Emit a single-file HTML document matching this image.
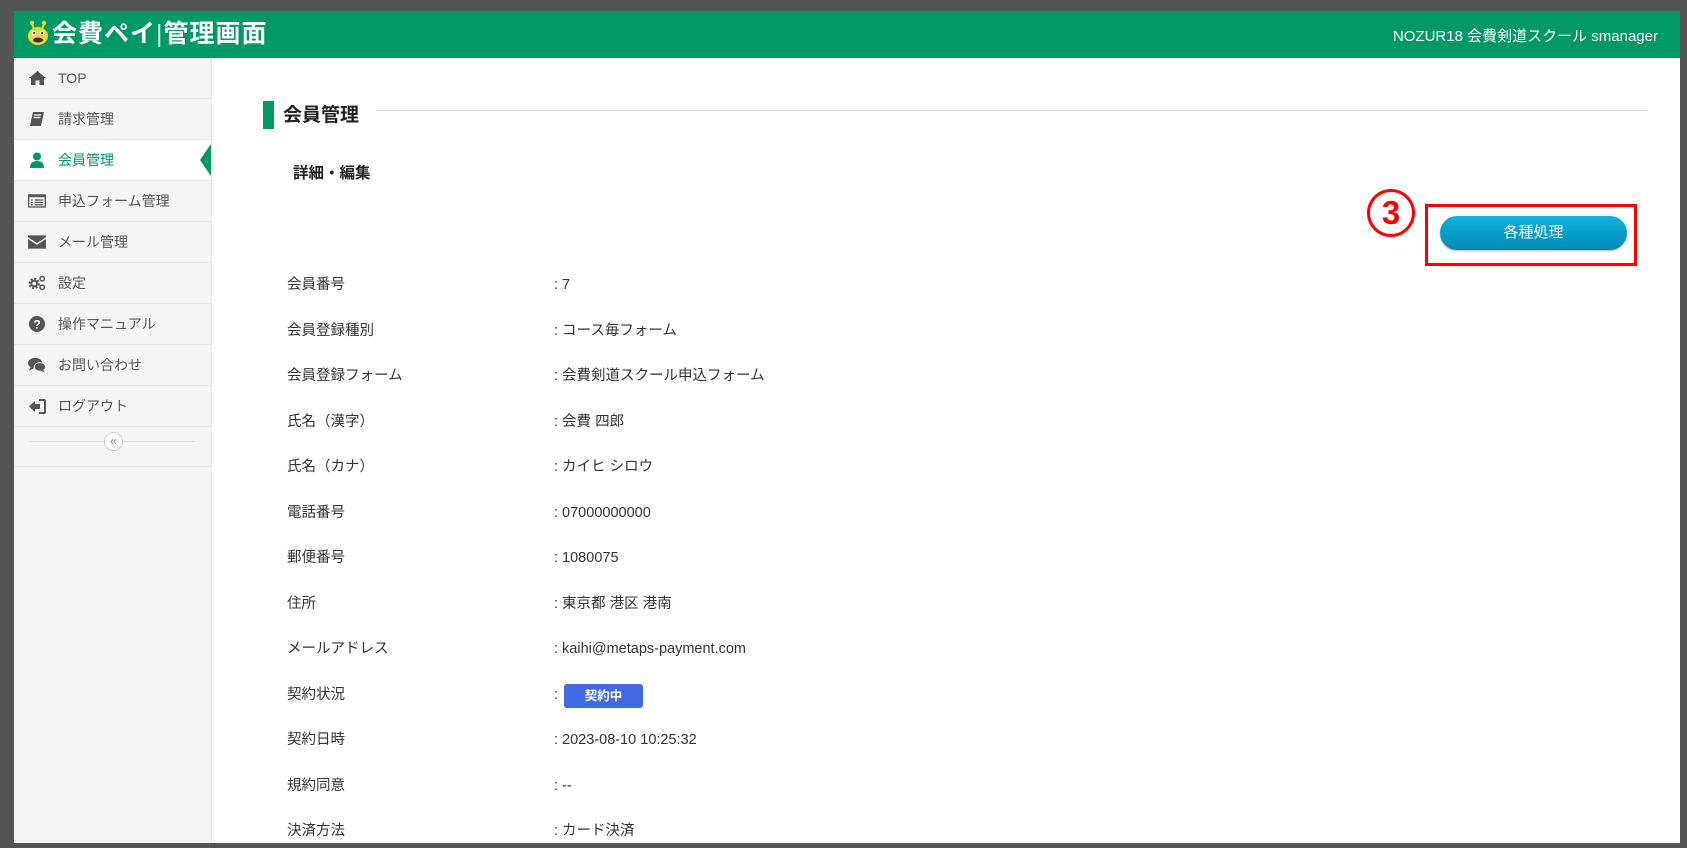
<!DOCTYPE html>
<html><head><meta charset="utf-8"><style>
*{margin:0;padding:0;box-sizing:border-box}
body{width:1687px;height:848px;overflow:hidden;background:#555;font-family:"Liberation Sans","Noto Sans CJK JP",sans-serif;position:relative}
#frame{position:absolute;left:14px;top:11px;width:1666px;height:832px;background:#fff;overflow:hidden}
#hdr{position:absolute;left:0;top:0;width:100%;height:47px;background:#009865}
#logo{position:absolute;left:40px;top:8px;color:#fff;font-size:25px;font-weight:bold;letter-spacing:1px;line-height:30px}
#user{position:absolute;right:22px;top:14px;color:#fff;font-size:15px}
#side{position:absolute;left:0;top:47px;width:198px;height:800px;background:#f5f5f5;border-right:1px solid #e6e6e6}
.it{height:41px;border-bottom:1px solid #e8e8e8;display:flex;align-items:center;font-size:14px;color:#555;position:relative}
.it .ic{width:18px;height:16px;margin:0 12px 0 14px;display:flex;align-items:center;justify-content:center}
.it.act{background:#fff;color:#009865}
.it.act:after{content:"";position:absolute;right:0;top:4px;border-right:11px solid #009865;border-top:16px solid transparent;border-bottom:16px solid transparent}
#col{height:40px;position:relative;border-bottom:1px solid #e8e8e8}
#col:before{content:"";position:absolute;left:16px;right:16px;top:14px;border-top:1px solid #ddd}
#col span{position:absolute;left:90px;top:5px;width:19px;height:19px;border:1px solid #ccc;border-radius:50%;background:#fff;font-size:12px;color:#888;text-align:center;line-height:16px}
.lbl,.val{position:absolute;font-size:14.5px;color:#333;line-height:22px;height:22px}
.lbl{left:273px}
.val{left:540px}
</style></head><body>
<div id="frame">
<div id="hdr">
<svg style="position:absolute;left:13px;top:9px" width="22" height="26" viewBox="0 0 22 26"><circle cx="5" cy="3" r="2.2" fill="#f3d23b"/><circle cx="17" cy="3" r="2.2" fill="#f3d23b"/><path d="M5 4 L7 9 M17 4 L15 9" stroke="#f3d23b" stroke-width="2"/><ellipse cx="11" cy="16" rx="10" ry="9" fill="#f3d23b"/><circle cx="7" cy="13" r="2.3" fill="#fff"/><circle cx="15" cy="13" r="2.3" fill="#fff"/><circle cx="7" cy="13" r="1" fill="#222"/><circle cx="15" cy="13" r="1" fill="#222"/><ellipse cx="11" cy="20" rx="5" ry="2.5" fill="#333"/></svg>
<div id="logo" style="left:38px">会費ペイ<span style="font-weight:normal;opacity:.8">|</span>管理画面</div>
<div id="user">NOZUR18 会費剣道スクール smanager</div>
</div>
<div id="side">
<div class="it"><span class="ic"><svg width="17" height="14" viewBox="0 0 17 14"><path d="M8.5 0 L17 7 L15 7 L15 14 L10.5 14 L10.5 9.5 L6.5 9.5 L6.5 14 L2 14 L2 7 L0 7 Z" fill="#555"/></svg></span>TOP</div>
<div class="it"><span class="ic"><svg width="16" height="16" viewBox="0 0 16 16"><path d="M4 1 H15 L12 15 H1 Z" fill="#555"/><path d="M5 4 H12 M4.5 6.5 H11.5" stroke="#fff" stroke-width="1.2"/></svg></span>請求管理</div>
<div class="it act"><span class="ic"><svg width="14" height="16" viewBox="0 0 14 16"><circle cx="7" cy="4.5" r="4" fill="#009865"/><path d="M0 16 Q0 9 7 9 Q14 9 14 16 Z" fill="#009865"/></svg></span>会員管理</div>
<div class="it"><span class="ic"><svg width="19" height="14" viewBox="0 0 19 14"><rect x="0.7" y="0.7" width="17.6" height="12.6" fill="none" stroke="#555" stroke-width="1.4"/><rect x="0" y="0" width="19" height="3" fill="#555"/><path d="M3 6 H5 M7 6 H16 M3 8.5 H5 M7 8.5 H16 M3 11 H5 M7 11 H16" stroke="#555" stroke-width="1.3"/></svg></span>申込フォーム管理</div>
<div class="it"><span class="ic"><svg width="19" height="14" viewBox="0 0 19 14"><path d="M0 0 H19 V2 L9.5 8 L0 2 Z M0 4 L9.5 10 L19 4 V14 H0 Z" fill="#555"/></svg></span>メール管理</div>
<div class="it"><span class="ic"><svg width="19" height="16" viewBox="0 0 19 16"><circle cx="6.5" cy="8.5" r="4.5" fill="none" stroke="#555" stroke-width="3" stroke-dasharray="2 1.5"/><circle cx="6.5" cy="8.5" r="3" fill="none" stroke="#555" stroke-width="2"/><circle cx="15" cy="3.5" r="2.3" fill="none" stroke="#555" stroke-width="1.6"/><circle cx="15" cy="12.5" r="2.3" fill="none" stroke="#555" stroke-width="1.6"/></svg></span>設定</div>
<div class="it"><span class="ic"><svg width="16" height="16" viewBox="0 0 16 16"><circle cx="8" cy="8" r="8" fill="#555"/><text x="8" y="12.5" font-size="12" font-weight="bold" fill="#fff" text-anchor="middle" font-family="Liberation Sans">?</text></svg></span>操作マニュアル</div>
<div class="it"><span class="ic"><svg width="19" height="16" viewBox="0 0 19 16"><ellipse cx="7.5" cy="6" rx="7.5" ry="5.5" fill="#555"/><path d="M3 10 L1 14 L7 11 Z" fill="#555"/><ellipse cx="12.5" cy="10" rx="6" ry="4.5" fill="#555" stroke="#f5f5f5" stroke-width="1"/><path d="M16 13 L18 16 L13 14 Z" fill="#555"/></svg></span>お問い合わせ</div>
<div class="it"><span class="ic"><svg width="17" height="15" viewBox="0 0 17 15"><path d="M0 7.5 L6 2 V5 H11 V10 H6 V13 Z" fill="#555"/><path d="M10 1 H15 Q16 1 16 2 V13 Q16 14 15 14 H10" fill="none" stroke="#555" stroke-width="2"/></svg></span>ログアウト</div>
<div id="col"><span>«</span></div>
</div>

<div style="position:absolute;left:249px;top:90px;width:11px;height:28px;background:#009865"></div>
<div style="position:absolute;left:269px;top:89px;font-size:19px;font-weight:bold;color:#222">会員管理</div>
<div style="position:absolute;left:362px;top:99px;width:1272px;border-top:1px solid #ddd"></div>
<div style="position:absolute;left:279px;top:150px;font-size:15.5px;font-weight:bold;color:#222">詳細・編集</div>

<div style="position:absolute;left:1353px;top:178px;width:48px;height:48px;border:3px solid #f00;border-radius:50%;color:#f00;font-size:33px;font-weight:bold;text-align:center;line-height:42px">3</div>
<div style="position:absolute;left:1411px;top:193px;width:212px;height:62px;border:3px solid #f00"></div>
<div style="position:absolute;left:1426px;top:205px;width:187px;height:34px;border-radius:17px;background:linear-gradient(#12b2de,#0089b3);box-shadow:0 1px 2px rgba(0,0,0,.3);color:#fff;font-size:15px;text-align:center;line-height:34px">各種処理</div>

<div class="lbl" style="top:263px">会員番号</div><div class="val" style="top:263px">: 7</div>
<div class="lbl" style="top:309px">会員登録種別</div><div class="val" style="top:309px">: コース毎フォーム</div>
<div class="lbl" style="top:354px">会員登録フォーム</div><div class="val" style="top:354px">: 会費剣道スクール申込フォーム</div>
<div class="lbl" style="top:400px">氏名（漢字）</div><div class="val" style="top:400px">: 会費 四郎</div>
<div class="lbl" style="top:445px">氏名（カナ）</div><div class="val" style="top:445px">: カイヒ シロウ</div>
<div class="lbl" style="top:491px">電話番号</div><div class="val" style="top:491px">: 07000000000</div>
<div class="lbl" style="top:536px">郵便番号</div><div class="val" style="top:536px">: 1080075</div>
<div class="lbl" style="top:582px">住所</div><div class="val" style="top:582px">: 東京都 港区 港南</div>
<div class="lbl" style="top:627px">メールアドレス</div><div class="val" style="top:627px">: kaihi@metaps-payment.com</div>
<div class="lbl" style="top:673px">契約状況</div><div class="val" style="top:673px">:</div>
<div style="position:absolute;left:550px;top:673px;width:79px;height:24px;background:#4169e1;border-radius:3px;color:#fff;font-size:12.5px;font-weight:bold;text-align:center;line-height:24px">契約中</div>
<div class="lbl" style="top:718px">契約日時</div><div class="val" style="top:718px">: 2023-08-10 10:25:32</div>
<div class="lbl" style="top:764px">規約同意</div><div class="val" style="top:764px">: --</div>
<div class="lbl" style="top:809px">決済方法</div><div class="val" style="top:809px">: カード決済</div>
</div>
</body></html>
